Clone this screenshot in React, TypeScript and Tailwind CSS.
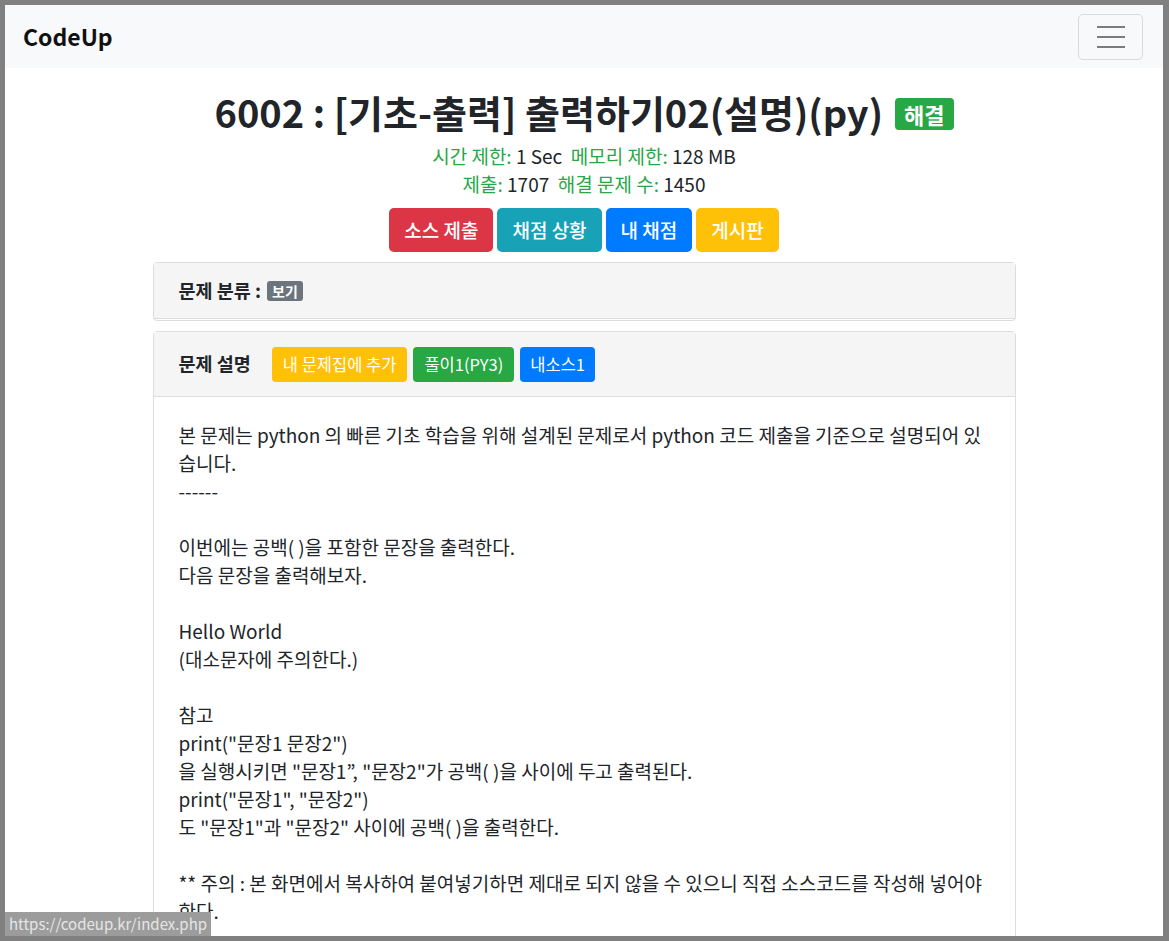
import React from "react";

const FONT = { fontFamily: '"Noto Sans CJK KR", "Noto Sans", sans-serif' };

function InfoLine({ items }: { items: [string, string][] }) {
  return (
    <div className="text-[19px] leading-[28px] text-[#212529]">
      {items.map(([label, value], i) => (
        <span key={i}>
          {i > 0 && <span>&nbsp; </span>}
          <span className="text-[#28a745]">{label}</span> {value}
        </span>
      ))}
    </div>
  );
}

const BODY_LINES = [
  "본 문제는 python 의 빠른 기초 학습을 위해 설계된 문제로서 python 코드 제출을 기준으로 설명되어 있습니다.",
  "------",
  "",
  "이번에는 공백( )을 포함한 문장을 출력한다.",
  "다음 문장을 출력해보자.",
  "",
  "Hello World",
  "(대소문자에 주의한다.)",
  "",
  "참고",
  'print("문장1 문장2")',
  '을 실행시키면 "문장1”, "문장2"가 공백( )을 사이에 두고 출력된다.',
  'print("문장1", "문장2")',
  '도 "문장1"과 "문장2" 사이에 공백( )을 출력한다.',
  "",
  "** 주의 : 본 화면에서 복사하여 붙여넣기하면 제대로 되지 않을 수 있으니 직접 소스코드를 작성해 넣어야 한다.",
];

export default function App() {
  return (
    <div className="bg-[#808080] pt-[5px] pl-[5px] pr-[6px] pb-[5px]" style={FONT}>
      <div className="relative h-[931px] overflow-hidden bg-white">
        {/* navbar */}
        <nav className="flex h-[63px] items-center justify-between bg-[#f8f9fa] pl-[18px] pr-[20px]">
          <span className="text-[23px] font-bold text-[#111]">CodeUp</span>
          <button className="flex h-[46px] w-[65px] flex-col items-center justify-center gap-[8px] rounded-[5px] border border-[#dadada]">
            <span className="block h-[2px] w-[28px] bg-[#7c7c7c]" />
            <span className="block h-[2px] w-[28px] bg-[#7c7c7c]" />
            <span className="block h-[2px] w-[28px] bg-[#7c7c7c]" />
          </button>
        </nav>

        {/* problem header */}
        <div className="flex flex-col items-center pt-[22px] text-center">
          <div className="flex items-center gap-[12px]">
            <h1 className="text-[38px] font-bold leading-[44px] text-[#212529]">
              6002 : [기초-출력] 출력하기02(설명)(py)
            </h1>
            <span className="mt-[3px] rounded-[4px] bg-[#28a745] px-[9px] text-[22px] font-bold leading-[32px] text-white">
              해결
            </span>
          </div>
          <div className="mt-[8px]">
            <InfoLine items={[["시간 제한:", "1 Sec"], ["메모리 제한:", "128 MB"]]} />
            <InfoLine items={[["제출:", "1707"], ["해결 문제 수:", "1450"]]} />
          </div>
          <div className="mt-[10px] flex gap-[4px]">
            <button className="h-[44px] rounded-[5px] bg-[#dc3545] px-[15px] text-[19px] font-medium text-white">소스 제출</button>
            <button className="h-[44px] rounded-[5px] bg-[#17a2b8] px-[15px] text-[19px] font-medium text-white">채점 상황</button>
            <button className="h-[44px] rounded-[5px] bg-[#007bff] px-[15px] text-[19px] font-medium text-white">내 채점</button>
            <button className="h-[44px] rounded-[5px] bg-[#ffc107] px-[15px] text-[19px] font-medium text-white">게시판</button>
          </div>
        </div>

        <div className="mx-auto mt-[10px] w-[863px]">
          {/* category card */}
          <div className="rounded-[4px] border border-[#dddddd]">
            <div className="flex h-[56px] items-center gap-[6px] border-b border-[#dddddd] bg-[#f5f5f5] px-[25px]">
              <span className="text-[18.5px] font-bold text-[#212529]">문제 분류 :</span>
              <span className="rounded-[3px] bg-[#6c757d] px-[5px] text-[14px] font-bold leading-[20px] text-white">보기</span>
            </div>
            <div className="h-[1px]" />
          </div>

          {/* description card */}
          <div className="mt-[10px] rounded-[4px] border border-[#dddddd]">
            <div className="flex h-[65px] items-center border-b border-[#dddddd] bg-[#f5f5f5] px-[25px]">
              <span className="mr-[21px] text-[18.5px] font-bold text-[#212529]">문제 설명</span>
              <div className="flex gap-[6px]">
                <button className="h-[35px] rounded-[4px] bg-[#ffc107] px-[11px] text-[16.5px] text-white">내 문제집에 추가</button>
                <button className="h-[35px] rounded-[4px] bg-[#28a745] px-[11px] text-[16.5px] text-white">풀이1(PY3)</button>
                <button className="h-[35px] rounded-[4px] bg-[#007bff] px-[10px] text-[16.5px] text-white">내소스1</button>
              </div>
            </div>
            <div className="px-[25px] pb-[30px] pt-[24px] text-[19px] leading-[28px] text-[#212529]">
              {BODY_LINES.map((line, i) => (
                <div key={i}>{line === "" ? "\u00a0" : line}</div>
              ))}
            </div>
          </div>
        </div>

        {/* status bar */}
        <div className="absolute bottom-0 left-0 bg-[#9c9c9c] px-[4px] text-[15px] leading-[24px] text-[#e6e6e6]">
          https://codeup.kr/index.php
        </div>
      </div>
    </div>
  );
}
